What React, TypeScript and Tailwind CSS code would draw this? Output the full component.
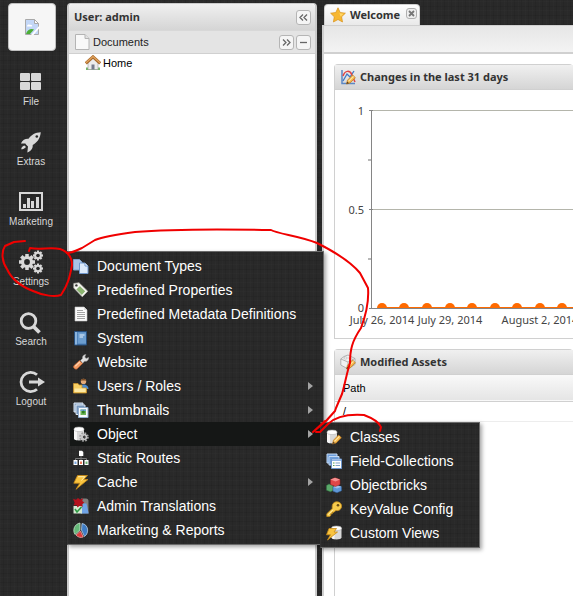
import type { ReactNode } from "react";

const tahoma = "font-['Noto_Sans','DejaVu_Sans',sans-serif]";
const arial = "font-['Liberation_Sans',Arial,sans-serif]";

const linen =
  "bg-[#292929] bg-[repeating-linear-gradient(90deg,rgba(255,255,255,0.012)_0_1px,transparent_1px_3px,rgba(0,0,0,0.07)_3px_4px,transparent_4px_7px),repeating-linear-gradient(0deg,rgba(255,255,255,0.012)_0_1px,transparent_1px_4px,rgba(0,0,0,0.07)_4px_5px,transparent_5px_9px)]";

const barGradient = "bg-linear-to-b from-[#f0f0f0] to-[#d5d5d5]";

function Icon({ children, size = 16 }: { children: ReactNode; size?: number }) {
  return (
    <svg width={size} height={size} viewBox="0 0 16 16" className="shrink-0" aria-hidden="true">
      {children}
    </svg>
  );
}

const Cylinder = () => (
  <>
    <path d="M1 3.200v9c0 1.300 2.200 2.300 5 2.300s5-1 5-2.300v-9z" fill="#d9d9d9" />
    <path d="M1 3.200v9c0 1 1.200 1.700 3 2.100V4z" fill="#f7f7f7" />
    <ellipse cx="6" cy="3.300" rx="5" ry="2.200" fill="#fff" stroke="#b5b5b5" strokeWidth=".6" />
  </>
);

const Pencil = () => (
  <g>
    <path d="M6.500 15l1-3.800L12.600 6l2.800 2.700-5.200 5.200z" fill="#f3b64a" stroke="#b9741c" strokeWidth=".7" />
    <path d="M8.500 12.300l5-5" stroke="#ffe6a0" strokeWidth="1.200" />
    <path d="M6.500 15l.7-2.500 1.900 1.800z" fill="#5c4426" />
  </g>
);

const icons = {
  documentTypes: (
    <Icon>
      <path d="M.5 1.500h6l2.500 2.500v8H.5z" fill="#a9c3e6" stroke="#7f9fc9" />
      <path d="M6.500 5h5.500l3 3v7.500H6.500z" fill="#dceafb" stroke="#6f97cc" />
      <path d="M12 5v3h3" fill="#fff" stroke="#6f97cc" />
    </Icon>
  ),
  tag: (
    <Icon>
      <path d="M.8 1.500L6 .8l8.700 8.400-5.400 5.600L.8 6z" fill="#f6f6f2" stroke="#b9b9b0" strokeWidth=".8" />
      <path d="M6.800 4.500l5 4.800-3 3.200-5-5z" fill="#8cb56f" stroke="#5f8e48" strokeWidth=".5" />
      <circle cx="3.400" cy="3.400" r="1.200" fill="#333" />
    </Icon>
  ),
  metadata: (
    <Icon>
      <path d="M2 1h9l3 3v11H2z" fill="#fbfbfb" stroke="#c4c4c4" strokeWidth=".6" />
      <path d="M11 1v3h3" fill="#ddd" />
      <path d="M4 4.500h6M4 6.500h8M4 8.500h8M4 10.500h8M4 12.500h8" stroke="#9a9a9a" strokeWidth=".9" />
    </Icon>
  ),
  book: (
    <Icon>
      <path d="M1.500 1.500h12v13.500h-12z" fill="#4f83bb" stroke="#274f7e" />
      <path d="M2 2h2v12.500H2z" fill="#8bb4dd" />
      <path d="M5 2.500h8v11H5z" fill="#6c9dcf" />
      <path d="M6.500 5h5M6.500 7h3.500" stroke="#e4f0fb" />
    </Icon>
  ),
  wrench: (
    <Icon>
      <path d="M7.500 6.500l2-2C9.200 2.300 10.500.6 12.800.4l-1 2.600 1.300 1.500 2.600-1.100c.2 2.600-1.900 4.300-4.200 3.900L9.500 9.300z" fill="#e0e0e0" stroke="#9a9a9a" strokeWidth=".6" />
      <path d="M6.500 6.500l3 3-5.300 5.300c-1.500 1.300-4.700-1-3.400-3z" fill="#f39a63" stroke="#b85f30" strokeWidth=".7" />
      <path d="M2.200 12.300l4.600-4.300" stroke="#ffcfa8" strokeWidth="1.400" />
    </Icon>
  ),
  users: (
    <Icon>
      <circle cx="10.500" cy="3.400" r="2.700" fill="#e4ab7a" />
      <path d="M7.500 3.300C7.500-.2 13.500-.2 13.500 3.300l-1-.8h-4z" fill="#7a4b25" />
      <path d="M6 11c0-6 9.500-6 9.500 0z" fill="#4c8bd0" />
      <path d="M.5 5.500h4.500l1.200 1.500H9v3h4.500v5H.5z" fill="#f7cf63" stroke="#c9922c" strokeWidth=".8" />
      <path d="M1.500 10.500h11v3.500h-11z" fill="#fde9a4" />
    </Icon>
  ),
  thumbnails: (
    <Icon>
      <path d="M1 1h9v9H1z" fill="#8fa9c8" stroke="#dbe6f2" />
      <path d="M3 3h9v9.500H3z" fill="#7494bb" stroke="#dbe6f2" />
      <path d="M5.500 5.500h9.500v10H5.500z" fill="#f7fafd" stroke="#8faccd" />
      <path d="M7.500 7.500h5.500v5.500H7.500z" fill="#6fb558" />
      <path d="M7.500 7.500h5.500v1.500H7.500z" fill="#6fa0dc" />
      <circle cx="10.300" cy="10" r="1.500" fill="#2f7f27" />
    </Icon>
  ),
  object: (
    <Icon>
      <Cylinder />
      <circle cx="11" cy="11" r="3.700" fill="none" stroke="#a0a0a0" strokeWidth="2.200" strokeDasharray="1.700 1.206" />
      <circle cx="11" cy="11" r="2.400" fill="none" stroke="#c4c4c4" strokeWidth="1.700" />
      <circle cx="11" cy="11" r="1.200" fill="#444" />
    </Icon>
  ),
  routes: (
    <Icon>
      <path d="M6 .8h3l1.300 1.300V6H6z" fill="#fff" />
      <path d="M8 6v2.500M2.500 10V8.500h11V10M8 8.500V10" fill="none" stroke="#777" />
      <path d="M.5 10h4v5h-4zM6 10h4v5H6zM11.500 10h4v5h-4z" fill="#fff" />
      <path d="M1.500 11.500h2V14h-2z" fill="#78a7e0" />
      <path d="M7 11.500h2V14H7z" fill="#ee7c5d" />
      <path d="M12.500 11.500h2V14h-2z" fill="#77b877" />
    </Icon>
  ),
  cache: (
    <Icon>
      <path d="M4.500 1.500h10L10.800 5.500H15L3 15.300 6.800 9.200H.8z" fill="#f9c440" stroke="#c98b16" strokeWidth=".8" />
      <path d="M5.200 2.700h6.600L8.500 6.500" fill="none" stroke="#ffedb0" />
    </Icon>
  ),
  translations: (
    <Icon>
      <path d="M8 .5h5c1.500 0 2.500 1 2.500 2.500v12.500H8z" fill="#7f7f7f" />
      <path d="M7.500 15.500L10 5.500h3.500l2.200 10z" fill="#6fa3e6" />
      <path d="M.5 8H9v7.500H.5z" fill="#d6e8d2" />
      <path d="M2 11l2 3 4.500-5" fill="none" stroke="#2d9b43" strokeWidth="1.600" />
      <path d="M0 .8l3 1L5 0l2 1.600L10 .3 9.300 3l2 1.500-2.100 1.700.5 2.600-3-1.100L4.500 9.500 3.500 7 .5 7.500 1.700 4.800z" fill="#b3101c" />
    </Icon>
  ),
  reports: (
    <Icon>
      <path d="M7 1v7L2 12.500C-.8 8 1.500 2 7 1z" fill="#64b878" stroke="#d5efd9" strokeWidth=".7" />
      <path d="M9 1.500c6.500 1 7.500 9.500 2.500 13L8.500 8z" fill="#3f7cc4" stroke="#c7dcf3" strokeWidth=".7" />
      <path d="M7.500 9l2.800 6c-2.800 1-5.500.3-7.300-2z" fill="#dd3b3b" stroke="#f3b9b9" strokeWidth=".7" />
    </Icon>
  ),
  classes: (
    <Icon>
      <Cylinder />
      <Pencil />
    </Icon>
  ),
  fieldCollections: (
    <Icon>
      <path d="M1 1h10v9H1z" fill="#6f9fdb" stroke="#c4daf5" />
      <path d="M3 3.500h10V12H3z" fill="#6f9fdb" stroke="#c4daf5" />
      <path d="M5.500 6h10v9.500h-10z" fill="#fff" stroke="#6d96cc" />
      <path d="M6 6.500h9V8H6z" fill="#8db3e6" />
      <path d="M7 10h1.500M7 12.500h1.500" stroke="#52a052" strokeWidth="1.200" />
      <path d="M9.500 10H14M9.500 12.500H14" stroke="#7f9fc9" />
    </Icon>
  ),
  bricks: (
    <Icon>
      <path d="M.5 8.500L3 7l4 1.500v5l-2.500 1.300-4-1.600z" fill="#5ba86a" stroke="#2f7440" strokeWidth=".5" />
      <path d="M7 10l4-1.800 4.500 1.600v4L11 15.800l-4-1.600z" fill="#5f97d6" stroke="#2c5f9b" strokeWidth=".5" />
      <path d="M7 10l4-1.800 4.500 1.600L11 11.500z" fill="#9cc1ec" />
      <path d="M4.500 2.500L9 .8l5 1.700v5L9.500 9.500l-5-2z" fill="#df4747" stroke="#9c2121" strokeWidth=".5" />
      <path d="M4.500 2.500L9 .8l5 1.700-4.500 2z" fill="#f49090" />
    </Icon>
  ),
  key: (
    <Icon>
      <path d="M6.300 7.500C5.500 3 8 .7 11 .8c3 0 5 2.500 4.600 5-.4 2.700-3.100 4.400-5.800 3.700L8 11.300H6.300v1.500H4.800v1.700L3.500 15.500H.8v-2.700z" fill="#f8cb4c" stroke="#c18b1c" strokeWidth=".8" />
      <circle cx="12" cy="4.300" r="1.300" fill="#6b4d14" />
      <path d="M2 13.800l5-5" stroke="#fff0b5" />
    </Icon>
  ),
  customViews: (
    <Icon>
      <g transform="translate(4.500 0)">
        <Cylinder />
      </g>
      <path d="M3 3.500h7.500L8 7h3.500L1.500 15 4.500 9.800H.5z" fill="#f9c440" stroke="#c98b16" strokeWidth=".8" />
    </Icon>
  ),
};

type Entry = { label: string; icon: ReactNode; sub?: boolean; active?: boolean };

const settingsMenu: Entry[] = [
  { label: "Document Types", icon: icons.documentTypes },
  { label: "Predefined Properties", icon: icons.tag },
  { label: "Predefined Metadata Definitions", icon: icons.metadata },
  { label: "System", icon: icons.book },
  { label: "Website", icon: icons.wrench },
  { label: "Users / Roles", icon: icons.users, sub: true },
  { label: "Thumbnails", icon: icons.thumbnails, sub: true },
  { label: "Object", icon: icons.object, sub: true, active: true },
  { label: "Static Routes", icon: icons.routes },
  { label: "Cache", icon: icons.cache, sub: true },
  { label: "Admin Translations", icon: icons.translations },
  { label: "Marketing & Reports", icon: icons.reports },
];

const objectMenu: Entry[] = [
  { label: "Classes", icon: icons.classes },
  { label: "Field-Collections", icon: icons.fieldCollections },
  { label: "Objectbricks", icon: icons.bricks },
  { label: "KeyValue Config", icon: icons.key },
  { label: "Custom Views", icon: icons.customViews },
];

function Menu({ items, label, className }: { items: Entry[]; label: string; className: string }) {
  return (
    <div
      role="menu"
      aria-label={label}
      className={`absolute border border-[#6b6b6b] border-l-[#333] px-0.5 py-0.5 shadow-[2px_2px_4px_rgba(0,0,0,0.35)] ${linen} ${arial} ${className}`}
    >
      {items.map((item) => (
        <button
          key={item.label}
          type="button"
          role="menuitem"
          className={`flex h-6 w-full items-center gap-2 pr-2 pl-[3px] text-left text-sm whitespace-nowrap text-white ${
            item.active ? "bg-[#151716]" : ""
          }`}
        >
          {item.icon}
          <span className="grow">{item.label}</span>
          {item.sub && (
            <svg width="5" height="8" viewBox="0 0 5 8" aria-hidden="true">
              <path d="M0 0l5 4-5 4z" fill="#a3a3a3" />
            </svg>
          )}
        </button>
      ))}
    </div>
  );
}

function Gear({ cx, cy, r }: { cx: number; cy: number; r: number }) {
  const teeth = [0, 45, 90, 135];
  return (
    <g transform={`translate(${cx} ${cy})`}>
      {teeth.map((angle) => (
        <rect key={angle} x={-r * 0.22} y={-r} width={r * 0.44} height={r * 2} transform={`rotate(${angle})`} fill="#d8d8d8" />
      ))}
      <circle r={r * 0.76} fill="#d8d8d8" />
      <circle r={r * 0.36} fill="#262727" />
    </g>
  );
}

const navItems = [
  {
    label: "File",
    art: (
      <g fill="#d8d8d8">
        <rect x="4" y="3" width="10" height="8" rx="1" />
        <rect x="15" y="3" width="10" height="8" rx="1" />
        <rect x="4" y="12" width="10" height="8" rx="1" />
        <rect x="15" y="12" width="10" height="8" rx="1" />
      </g>
    ),
  },
  {
    label: "Extras",
    art: (
      <>
        <path d="M24.800 2.200C19 2.400 15.800 4.600 12.500 8.800c-3-.3-5.800 1-7.600 4.600l4.500.1c.8 1.300 1.400 2 2.600 3l-.7 6c3.600-1.400 5.800-4 5.400-7.500 4.500-2.700 7.300-6 8.100-12.800z" fill="#d8d8d8" />
        <path d="M8.500 15.500c-1.800.3-3 1.600-3.300 3.800 1.800 0 3.500-.8 4.800-2.300z" fill="#d8d8d8" />
        <circle cx="20.800" cy="6.500" r="1.300" fill="#262727" />
      </>
    ),
  },
  {
    label: "Marketing",
    art: (
      <>
        <path d="M4 3h22v17H4z" fill="none" stroke="#d8d8d8" strokeWidth="2" />
        <path d="M7 14h3v4H7zM11 8h3v10h-3zM15 11h3v7h-3zM20 7h3v11h-3z" fill="#d8d8d8" />
      </>
    ),
  },
  {
    label: "Settings",
    art: (
      <>
        <Gear cx={11} cy={12} r={8} />
        <Gear cx={22} cy={5.5} r={5} />
        <Gear cx={22} cy={18.5} r={5} />
      </>
    ),
  },
  {
    label: "Search",
    art: (
      <>
        <circle cx="12.500" cy="11" r="7.300" fill="none" stroke="#d8d8d8" strokeWidth="2.800" />
        <path d="M17.500 16.500l6 6" stroke="#d8d8d8" strokeWidth="3.800" />
      </>
    ),
  },
  {
    label: "Logout",
    art: (
      <>
        <path d="M21 4.800a9.600 9.600 0 1 0 0 14.400" fill="none" stroke="#d8d8d8" strokeWidth="2.800" />
        <path d="M13 10.500h9V7.500L29 12 22 16.500v-3h-9z" fill="#d8d8d8" />
      </>
    ),
  },
];

function Sidebar() {
  return (
    <nav className={`flex w-[67px] shrink-0 flex-col pt-[3px] ${arial}`}>
      <a
        href="#home"
        aria-label="Home"
        className="ml-2 flex size-12 items-center justify-center rounded border border-[#c0c0c0] bg-[#f6f6f6]"
      >
        <svg width="16" height="16" viewBox="0 0 16 16" aria-hidden="true">
          <path d="M1.500.5h9L14.500 4.500v11h-13z" fill="#c3d7f7" stroke="#a9a9a9" />
          <path d="M10.500.5v4h4z" fill="#fff" stroke="#a9a9a9" />
          <path d="M3 7.500c0-2 2-2.500 3-1.500 1.500-.5 2.500.5 2 1.500z" fill="#fff" />
          <path d="M2 15c1-4.500 5.500-6 8-4.500L6 15z" fill="#4cae35" />
          <path d="M7 16L15.500 6.500V9L9.500 16z" fill="#fff" />
        </svg>
      </a>
      <div className="flex flex-col pt-[19px]">
        {navItems.map((item) => (
          <button key={item.label} type="button" className="flex h-[60px] w-[62px] flex-col items-center text-[#d8d8d8]">
            <svg width="28" height="24" viewBox="1 0 28 24" aria-hidden="true">
              {item.art}
            </svg>
            <span className="mt-px text-[10px] leading-[14px]">{item.label}</span>
          </button>
        ))}
      </div>
    </nav>
  );
}

function ToolButton({ label, d }: { label: string; d: string }) {
  return (
    <button
      type="button"
      aria-label={label}
      className="flex size-[15px] items-center justify-center rounded-[3px] border border-[#b5b5b5] bg-[#f5f5f5]"
    >
      <svg width="11" height="11" viewBox="0 0 11 11" aria-hidden="true">
        <path d={d} fill="none" stroke="#666" strokeWidth="1.300" />
      </svg>
    </button>
  );
}

function DocumentsPanel() {
  return (
    <section className="flex w-[250px] shrink-0 flex-col self-stretch pt-[3px]">
      <div className="flex grow flex-col rounded-t border-x-2 border-t border-[#cbcbcb] bg-white">
        <header className={`flex h-[26px] items-center justify-between rounded-t pr-1 pl-[5px] ${barGradient}`}>
          <h2 className="text-[11px] font-bold text-[#333]">User: admin</h2>
          <ToolButton label="Collapse panel" d="M5 2.500l-3 3 3 3M9 2.500l-3 3 3 3" />
        </header>
        <header className="flex h-6 items-center gap-[3px] border-y border-t-[#d8d8d8] border-b-[#d0d0d0] bg-[#e4e4e4] pr-1 pl-1.5">
          <svg width="15" height="16" viewBox="0 0 15 16" aria-hidden="true">
            <path d="M.5.5h9.500l4 4v11H.5z" fill="#f8f8f8" stroke="#b4b4b4" />
            <path d="M10 .5v4h4" fill="#e2e2e2" stroke="#b4b4b4" />
          </svg>
          <h3 className={`grow text-[11px] text-[#222] ${arial}`}>Documents</h3>
          <div className="flex gap-0.5">
            <ToolButton label="Move right" d="M2 2.500l3 3-3 3M6 2.500l3 3-3 3" />
            <ToolButton label="Collapse" d="M2 5.500h7" />
          </div>
        </header>
        <a href="#tree-home" className={`flex h-[18px] items-center gap-0.5 pl-4 text-[11px] text-black ${arial}`}>
          <Icon>
            <path d="M1 12.500h14v2.500H1z" fill="#76b76c" />
            <path d="M3 7l5-4.500L13 7v7.500H3z" fill="#ececec" stroke="#9c9c9c" strokeWidth=".6" />
            <path d="M6.500 9.500h3v5h-3z" fill="#767c8c" />
            <path d="M.8 8.300L8 1.800l7.200 6.500" fill="none" stroke="#a96a2b" strokeWidth="3" />
            <path d="M1 7.800L8 1.600l7 6.200" fill="none" stroke="#e2a45f" strokeWidth="1.200" />
          </Icon>
          Home
        </a>
      </div>
    </section>
  );
}

const points = [47, 69, 92, 115, 137, 160, 182, 205, 227, 250, 272, 295, 317];
const dates = [
  { x: 47, text: "July 26, 2014" },
  { x: 115, text: "July 29, 2014" },
  { x: 205, text: "August 2, 2014" },
];

function ChangesChart() {
  return (
    <svg width="100%" height="248" className="block" role="img" aria-label="Changes in the last 31 days">
      <path d="M34 20.500H2000M34 119.500H2000" stroke="#b4b5ab" />
      <path d="M33 70h3M33 169h3" stroke="#b8b8b8" strokeWidth="2" />
      <path d="M47 217.500H2000" stroke="#ff6a00" />
      {points.map((x) => (
        <path key={x} d={`M${x - 5} 218a5 5 0 0 1 10 0z`} fill="#ff6a00" />
      ))}
      <path d="M36.500 20v198.500M34 20.500h4M34 119.500h4M34 218.500H2000" fill="none" stroke="#858585" />
      <g fill="#444" fontSize="11">
        <text x="29" y="25" textAnchor="end">1</text>
        <text x="29" y="124" textAnchor="end">0.5</text>
        <text x="29" y="222" textAnchor="end">0</text>
        {dates.map((date) => (
          <text key={date.text} x={date.x} y="234" textAnchor="middle">
            {date.text}
          </text>
        ))}
      </g>
    </svg>
  );
}

function Portlet({ title, icon, children }: { title: string; icon: ReactNode; children: ReactNode }) {
  return (
    <section className="shrink-0 rounded-t border border-r-0 border-[#d0d0d0] bg-white">
      <header className={`flex h-[25px] items-center gap-1 border-b border-[#d0d0d0] pl-[5px] ${barGradient}`}>
        {icon}
        <h2 className="text-[11px] font-bold whitespace-nowrap text-[#333]">{title}</h2>
      </header>
      {children}
    </section>
  );
}

function WelcomePanel() {
  return (
    <main className="flex min-w-0 grow flex-col pt-1">
      <div className="flex h-[21px] shrink-0 pl-0.5">
        <div className="flex items-center rounded-t border border-b-0 border-[#d0d0d0] bg-linear-to-b from-white to-[#e9e9e9] pr-0.5 pl-[5px]">
          <svg width="16" height="16" viewBox="0 0 16 16" aria-hidden="true">
            <path d="M8 .8l2.200 4.700 5.200.7-3.800 3.600.9 5.200L8 12.500l-4.600 2.500.9-5.200L.6 6.200l5.200-.7z" fill="#f7b731" stroke="#d8921a" strokeWidth=".7" />
            <path d="M8 2.500l1.600 3.700 4 .6-3 2.700" fill="#ffd767" />
          </svg>
          <button type="button" className="ml-1 text-[11px] font-bold text-[#333]">Welcome</button>
          <button
            type="button"
            aria-label="Close Welcome"
            className="mb-1 ml-1.5 flex size-[11px] items-center justify-center rounded-[3px] border border-[#b0b0b0] bg-[#eee]"
          >
            <svg width="7" height="7" viewBox="0 0 7 7" aria-hidden="true">
              <path d="M1 1l5 5M6 1L1 6" stroke="#777" strokeWidth="1.800" />
            </svg>
          </button>
        </div>
      </div>
      <div className="h-[29px] shrink-0 border-t border-b-2 border-l-2 border-[#d0d0d0] bg-linear-to-b from-[#e6e6e6] to-[#f3f3f3]" />
      <div className="flex min-h-0 grow flex-col gap-[10px] border-l-2 border-[#d0d0d0] bg-white pt-[10px] pl-[10px]">
        <Portlet
          title="Changes in the last 31 days"
          icon={
            <Icon>
              <path d="M2 1v13.500h13" fill="none" stroke="#5b87c4" strokeWidth="1.500" />
              <path d="M3 12L7 5l3 3 4-6" fill="none" stroke="#3f79c6" strokeWidth="1.300" />
              <path d="M3 7c2-6 7-6 9-1l3 7" fill="none" stroke="#e04545" strokeWidth="1.500" />
              <Pencil />
            </Icon>
          }
        >
          <ChangesChart />
        </Portlet>
        <Portlet
          title="Modified Assets"
          icon={
            <Icon>
              <path d="M.8 5L4 2.500 8 1l7 3.500v6L8 15l-7.200-4z" fill="#f1f1f1" stroke="#a3a3a3" strokeWidth=".8" />
              <path d="M.8 5L8 8l7-3.500M8 8v6.500" fill="none" stroke="#a3a3a3" strokeWidth=".8" />
              <ellipse cx="5.500" cy="4" rx="1.800" ry="1" fill="#fff" stroke="#aaa" strokeWidth=".6" />
              <ellipse cx="10.500" cy="4" rx="1.800" ry="1" fill="#fff" stroke="#aaa" strokeWidth=".6" />
              <Pencil />
            </Icon>
          }
        >
          <table className={`w-full border-collapse text-left text-[11px] text-black ${arial}`}>
            <thead>
              <tr className="h-[26px] border-b border-[#d0d0d0] bg-linear-to-b from-[#f9f9f9] to-[#e5e5e5]">
                <th className="py-0 pl-2 font-normal">Path</th>
              </tr>
            </thead>
            <tbody>
              <tr className="h-5 border-b border-[#ededed]">
                <td className="py-0 pl-2">/</td>
              </tr>
            </tbody>
          </table>
          <div className="h-[300px]" />
        </Portlet>
      </div>
    </main>
  );
}

export default function App() {
  return (
    <div className={`relative flex h-screen overflow-hidden ${linen} ${tahoma}`}>
      <Sidebar />
      <DocumentsPanel />
      <div className="w-[5px] shrink-0" />
      <WelcomePanel />

      <Menu label="Settings" items={settingsMenu} className="top-[251px] left-[67px] w-[257px]" />
      <Menu label="Object" items={objectMenu} className="top-[422px] left-[320px] w-[160px]" />

      <svg
        width="573"
        height="596"
        viewBox="0 0 573 596"
        className="pointer-events-none absolute top-0 left-0"
        fill="none"
        stroke="#f00000"
        strokeWidth="2"
        strokeLinecap="round"
        strokeLinejoin="round"
        aria-hidden="true"
      >
        <path d="M25 241L14 242 5 246C1 252 2 262 7 269 11 278 20 286 33 291 44 296 55 297 61 295 68 285 70 276 72 265 72 258 69 252 60 249 50 247 40 250 30 248L29 251" />
        <path d="M67 253C73 253 77 250 82 248L95 240C105 236 120 234 135 232 170 229 220 229 271 230 278 234 300 236 317 243 335 252 350 261 360 273L368 288C369 300 367 312 361 328 352 341 350 350 350 363 347 372 345 384 342 394L336 408 335 411 326 421 313 432 325 421" />
        <path d="M316 432L320 432 328 424C336 416 350 414 364 415 372 418 379 422 381 427L380 431" />
      </svg>
    </div>
  );
}
